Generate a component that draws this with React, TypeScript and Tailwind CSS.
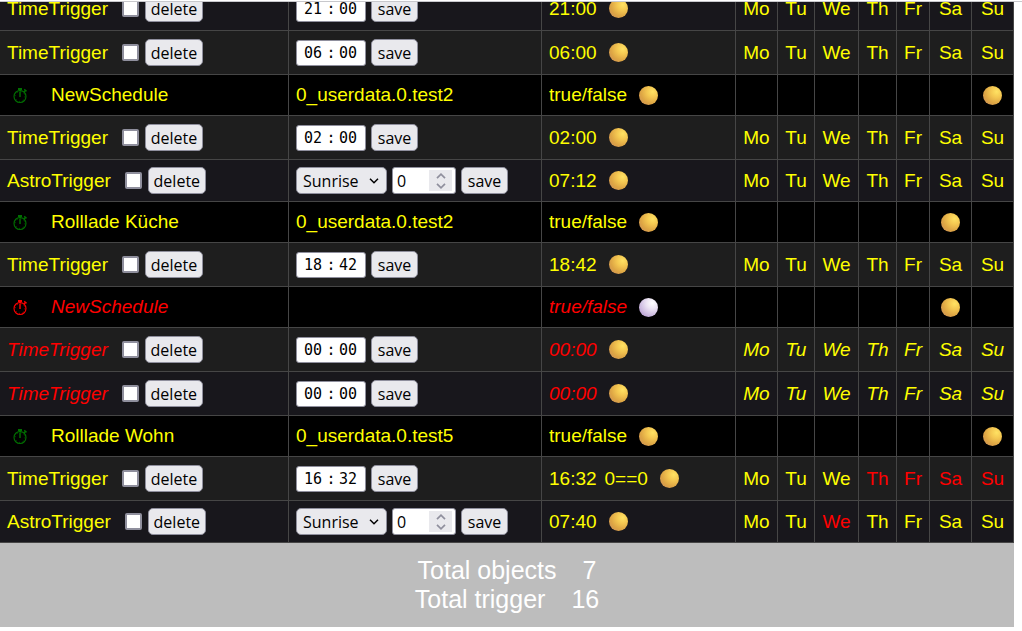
import React from "react";

type Bulb = "gold" | "silver";

type Trigger = {
  kind: "time" | "astro";
  time: string;
  condition?: string;
  inactive?: boolean;
  shade: "light" | "dark";
  offDays?: string[];
};

type Schedule = {
  kind: "schedule";
  name: string;
  target: string;
  bulb: Bulb;
  inactive?: boolean;
  marked?: string;
};

const DAYS = ["Mo", "Tu", "We", "Th", "Fr", "Sa", "Su"];

const ROWS: (Trigger | Schedule)[] = [
  { kind: "time", time: "21:00", shade: "dark" },
  { kind: "time", time: "06:00", shade: "light" },
  { kind: "schedule", name: "NewSchedule", target: "0_userdata.0.test2", bulb: "gold", marked: "Su" },
  { kind: "time", time: "02:00", shade: "light" },
  { kind: "astro", time: "07:12", shade: "dark" },
  { kind: "schedule", name: "Rolllade Küche", target: "0_userdata.0.test2", bulb: "gold", marked: "Sa" },
  { kind: "time", time: "18:42", shade: "light" },
  { kind: "schedule", name: "NewSchedule", target: "", bulb: "silver", inactive: true, marked: "Sa" },
  { kind: "time", time: "00:00", shade: "light", inactive: true },
  { kind: "time", time: "00:00", shade: "dark", inactive: true },
  { kind: "schedule", name: "Rolllade Wohn", target: "0_userdata.0.test5", bulb: "gold", marked: "Su" },
  { kind: "time", time: "16:32", condition: "0==0", shade: "light", offDays: ["Th", "Fr", "Sa", "Su"] },
  { kind: "astro", time: "07:40", shade: "dark", offDays: ["We"] },
];

const CELL = "border-r border-b border-[#464646] p-0 align-middle whitespace-nowrap";
const BUTTON =
  "rounded-[5px] border border-[#8f8f9d] bg-[#e9e9ed] font-['Open_Sans',sans-serif] text-base leading-6 text-black";

function Ball({ tone }: { tone: Bulb }) {
  return (
    <span
      role="img"
      aria-label={tone === "gold" ? "on" : "off"}
      className={
        "inline-block size-[19px] shrink-0 rounded-full " +
        (tone === "gold"
          ? "bg-[radial-gradient(circle_at_72%_30%,#ffe263_0%,#f4c751_30%,#dda544_62%,#c98a60_100%)]"
          : "bg-[radial-gradient(circle_at_70%_26%,#ffffff_0%,#ebe2f3_32%,#cbb8df_66%,#a688c8_100%)]")
      }
    />
  );
}

function Stopwatch({ className }: { className: string }) {
  return (
    <svg viewBox="0 0 16 17" fill="none" stroke="currentColor" className={"h-[17px] w-4 shrink-0 " + className} aria-hidden="true">
      <circle cx="7" cy="9.5" r="6" strokeWidth="1.1" />
      <circle cx="7" cy="9.5" r="4.9" strokeWidth="1" strokeDasharray="0.8 3.05" />
      <path d="M7 4.5V10" strokeWidth="1.4" />
      <path d="M5 2h4M7 2v2" strokeWidth="2" />
      <path d="M11.2 2.4l2.4 1.8M12.6 3.2l-1.3 1.8" strokeWidth="1.4" />
    </svg>
  );
}

function TimeField({ value }: { value: string }) {
  const [hours, minutes] = value.split(":");
  const part = "w-[19px] bg-transparent p-0 text-black outline-none";
  return (
    <div className="flex h-[26px] w-[70px] items-center justify-center rounded-[3px] border border-[#8f8f9d] bg-white font-['DejaVu_Sans_Mono',monospace] text-[15px] text-black">
      <input type="text" aria-label="Hours" defaultValue={hours} className={part} />
      <span className="w-4 text-center">:</span>
      <input type="text" aria-label="Minutes" defaultValue={minutes} className={part} />
    </div>
  );
}

function AstroField() {
  return (
    <>
      <div className="relative">
        <select
          aria-label="Astro event"
          defaultValue="Sunrise"
          className="block h-[27px] w-[91px] appearance-none rounded-[5px] border border-[#8f8f9d] bg-[#e9e9ed] pl-1.5 font-['Open_Sans',sans-serif] text-base leading-6 text-black"
        >
          <option>Sunrise</option>
          <option>Sunset</option>
          <option>SolarNoon</option>
        </select>
        <svg viewBox="0 0 10 6" className="pointer-events-none absolute top-[11px] right-2 h-1.5 w-2.5" fill="none" stroke="#000" strokeWidth="1.5">
          <path d="M1 .8l4 4 4-4" />
        </svg>
      </div>
      <div className="relative">
        <input
          type="text"
          inputMode="numeric"
          aria-label="Shift in minutes"
          defaultValue="0"
          className="block h-[27px] w-16 rounded-[3px] border border-[#8f8f9d] bg-white pr-6 pl-1 font-['Open_Sans',sans-serif] text-base leading-6 text-black"
        />
        <span className="pointer-events-none absolute top-[3px] right-1 flex h-[21px] w-[23px] items-center justify-center bg-[#e9e9ed]">
          <svg viewBox="0 0 10 16" className="h-4 w-2.5" fill="none" stroke="#8f8f9d" strokeWidth="1.7">
            <path d="M1 5.2l4-4 4 4M1 10.8l4 4 4-4" />
          </svg>
        </span>
      </div>
    </>
  );
}

function TriggerRow({ row }: { row: Trigger }) {
  const astro = row.kind === "astro";
  const tone = row.inactive ? "text-[#ff0000] italic" : "text-[#ffff00]";
  return (
    <tr className={(astro ? "h-[42px] " : "h-11 ") + (row.shade === "light" ? "bg-[#1e1e1e]" : "bg-[#18171c]")}>
      <td className={CELL}>
        <div className="flex items-center pl-[7px]">
          <span className={tone}>{astro ? "AstroTrigger" : "TimeTrigger"}</span>
          <input
            type="checkbox"
            aria-label="Select trigger"
            className="ml-3.5 size-[17px] appearance-none rounded-[2px] border-2 border-[#8f8f9d] bg-white checked:bg-[#0060df]"
          />
          <button type="button" className={BUTTON + " ml-1.5 h-[27px] w-[58px]"}>
            delete
          </button>
        </div>
      </td>
      <td className={CELL}>
        <div className="flex items-center gap-[5px] pl-[7px]">
          {astro ? <AstroField /> : <TimeField value={row.time} />}
          <button type="button" className={BUTTON + " h-[27px] w-[47px]"}>
            save
          </button>
        </div>
      </td>
      <td className={CELL}>
        <div className="flex items-center gap-3 pl-[7px]">
          <span className={tone}>
            {row.time}
            {row.condition && <span className="ml-2">{row.condition}</span>}
          </span>
          <Ball tone="gold" />
        </div>
      </td>
      {DAYS.map((day) => (
        <td key={day} className={CELL + " text-center"}>
          <span className={(row.offDays?.includes(day) ? "text-[#ff0000]" : "text-[#ffff00]") + (row.inactive ? " italic" : "")}>{day}</span>
        </td>
      ))}
    </tr>
  );
}

function ScheduleRow({ row }: { row: Schedule }) {
  const tone = row.inactive ? "text-[#ff0000] italic" : "text-[#ffff00]";
  return (
    <tr className="h-[41px] bg-black">
      <td className={CELL}>
        <div className="flex items-center gap-[22px] pl-[13px]">
          <Stopwatch className={row.inactive ? "text-[#ff0000]" : "text-[#007000]"} />
          <span className={tone}>{row.name}</span>
        </div>
      </td>
      <td className={CELL}>
        <div className={"pl-[7px] " + tone}>{row.target}</div>
      </td>
      <td className={CELL}>
        <div className="flex items-center gap-3 pl-[7px]">
          <span className={tone}>true/false</span>
          <Ball tone={row.bulb} />
        </div>
      </td>
      {DAYS.map((day) => (
        <td key={day} className={CELL}>
          <div className="flex justify-center">{row.marked === day && <Ball tone="gold" />}</div>
        </td>
      ))}
    </tr>
  );
}

export default function App() {
  return (
    <main className="min-h-screen bg-white pt-px font-['Liberation_Sans',Arial,sans-serif] text-[19px] leading-6">
      <div className="overflow-hidden border-t border-[#c8c8cc] pr-2">
        <table className="-mt-[15px] w-full table-fixed border-separate border-spacing-0">
          <colgroup>
            <col className="w-[289px]" />
            <col className="w-[253px]" />
            <col />
            <col className="w-[42px]" />
            <col className="w-[37px]" />
            <col className="w-11" />
            <col className="w-[38px]" />
            <col className="w-[33px]" />
            <col className="w-[42px]" />
            <col className="w-[42px]" />
          </colgroup>
          <tbody>
            {ROWS.map((row, i) => (row.kind === "schedule" ? <ScheduleRow key={i} row={row} /> : <TriggerRow key={i} row={row} />))}
          </tbody>
        </table>
        <footer className="flex flex-col items-center bg-[#bdbdbd] pt-[13px] pb-[13px] text-[25px] leading-[29px] text-white">
          <p>
            Total objects<span className="ml-[26px]">7</span>
          </p>
          <p>
            Total trigger<span className="ml-[26px]">16</span>
          </p>
        </footer>
      </div>
    </main>
  );
}
